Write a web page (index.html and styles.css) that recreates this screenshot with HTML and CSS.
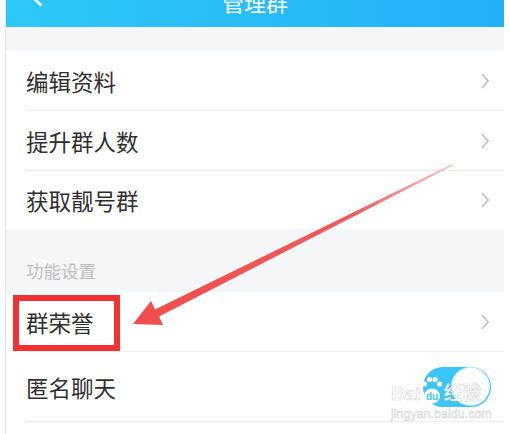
FILE: index.html
```html
<!DOCTYPE html>
<html lang="zh-CN">
<head>
    <meta charset="UTF-8">
    <title>管理群</title>
    <link rel="stylesheet" href="styles.css">
</head>
<body>
    <div class="phone">
        <header class="topbar">
            <svg class="back" width="14" height="22" viewBox="0 0 14 22">
                <path d="M11 1 L2 9 L11 17" fill="none" stroke="#fff" stroke-width="2.4" stroke-linecap="round" stroke-linejoin="round"/>
            </svg>
            <div class="title">管理群</div>
            <div></div>
        </header>

        <div class="gap"></div>

        <div class="group">
            <div class="row"><span>编辑资料</span><svg class="chev" width="10" height="18" viewBox="0 0 10 18"><path d="M2 2 L8 9 L2 16" fill="none" stroke="#c2c2c2" stroke-width="1.8"/></svg></div>
            <div class="row"><span>提升群人数</span><svg class="chev" width="10" height="18" viewBox="0 0 10 18"><path d="M2 2 L8 9 L2 16" fill="none" stroke="#c2c2c2" stroke-width="1.8"/></svg></div>
            <div class="row last"><span>获取靓号群</span><svg class="chev" width="10" height="18" viewBox="0 0 10 18"><path d="M2 2 L8 9 L2 16" fill="none" stroke="#c2c2c2" stroke-width="1.8"/></svg></div>
        </div>

        <div class="section">功能设置</div>

        <div class="group">
            <div class="row"><span>群荣誉</span><svg class="chev" width="10" height="18" viewBox="0 0 10 18"><path d="M2 2 L8 9 L2 16" fill="none" stroke="#c2c2c2" stroke-width="1.8"/></svg></div>
            <div class="row tall"><span>匿名聊天</span><div class="toggle"><div class="knob"></div></div></div>
        </div>
    </div>

    <!-- annotation layered over the screenshot -->
    <div class="mark"></div>
    <svg class="arrow" width="510" height="434" viewBox="0 0 510 434">
        <defs>
            <linearGradient id="fade" x1="133" y1="324" x2="455" y2="164" gradientUnits="userSpaceOnUse">
                <stop offset="0" stop-color="#f24c4c"/>
                <stop offset="0.7" stop-color="#f25a5a"/>
                <stop offset="1" stop-color="#f58a8a" stop-opacity="0.5"/>
            </linearGradient>
        </defs>
        <polygon fill="url(#fade)" points="133,324 151,301 155,309.5 451.7,164.2 452.4,165.8 159,316.5 163,325"/>
    </svg>

    <div class="watermark">
        <div class="wm-top">Bai<span class="paw"><svg width="24" height="30" viewBox="0 0 24 30"><circle cx="4.5" cy="8" r="2.6" fill="#fff"/><circle cx="9.5" cy="3.5" r="2.6" fill="#fff"/><circle cx="15" cy="3.5" r="2.6" fill="#fff"/><circle cx="19.5" cy="8" r="2.6" fill="#fff"/><ellipse cx="12" cy="20" rx="8" ry="7.5" fill="#fff"/><text x="12" y="24" font-size="10" text-anchor="middle" fill="#3cc5f4" font-family="Liberation Sans, sans-serif">du</text></svg></span>经验</div>
        <div class="wm-url">jingyan.baidu.com</div>
    </div>
</body>
</html>
```

FILE: styles.css
```css
* {
    box-sizing: border-box;
    margin: 0;
    padding: 0;
}

html,
body {
    width: 510px;
    height: 434px;
    overflow: hidden;
}

body {
    position: relative;
    background: #fff;
    font-family: "Noto Sans CJK SC", "Noto Sans", sans-serif;
    color: #333;
}

.phone {
    margin-left: 5px;
    width: 499px;
    height: 434px;
    border-left: 1px solid #e2e2e2;
    background: #fff;
}

.topbar {
    height: 27px;
    overflow: hidden;
    display: grid;
    grid-template-columns: 1fr auto 1fr;
    background: linear-gradient(90deg, #2dc8f8, #24b0f8);
}

.back {
    margin: -12px 0 0 24px;
}

.title {
    margin-top: -14px;
    font-size: 22px;
    line-height: 30px;
    color: #fff;
}

.gap {
    height: 24px;
    background: #f5f6f8;
}

.row {
    margin-left: 20px;
    padding-right: 14px;
    height: 60px;
    display: flex;
    align-items: center;
    justify-content: space-between;
    border-bottom: 1px solid #eeeeee;
    font-size: 22.5px;
    color: #2f2f2f;
}

.row.last {
    height: 58px;
    border-bottom: none;
}

.row.tall {
    height: 70px;
}

.section {
    height: 63px;
    padding: 0 0 9px 20px;
    display: flex;
    align-items: flex-end;
    background: #f5f6f8;
    font-size: 17.5px;
    color: #bdbdbd;
}

.toggle {
    width: 68px;
    height: 40px;
    margin-right: -1px;
    border-radius: 20px;
    background: #3cc6f5;
    display: flex;
    justify-content: flex-end;
    align-items: center;
    padding-right: 2px;
}

.knob {
    width: 37px;
    height: 37px;
    border-radius: 50%;
    background: #fff;
    box-shadow: 0 0 0 1px #cfeefb;
}

.mark {
    position: absolute;
    left: 13px;
    top: 295px;
    width: 107px;
    height: 56px;
    border: 6px solid #f23232;
}

.arrow {
    position: absolute;
    left: 0;
    top: 0;
}

.watermark {
    position: absolute;
    left: 391px;
    top: 376px;
    color: rgba(255, 255, 255, 0.85);
    -webkit-text-stroke: 0.6px rgba(170, 170, 170, 0.5);
    font-family: "Liberation Sans", "Noto Sans CJK SC", sans-serif;
}

.wm-top {
    display: flex;
    align-items: flex-end;
    font-size: 19px;
    line-height: 20px;
    font-weight: bold;
}

.wm-top .paw {
    display: flex;
    margin: 0 0 -2px -1px;
}

.wm-url {
    margin-top: 3px;
    font-size: 12.5px;
    line-height: 14px;
}
```
